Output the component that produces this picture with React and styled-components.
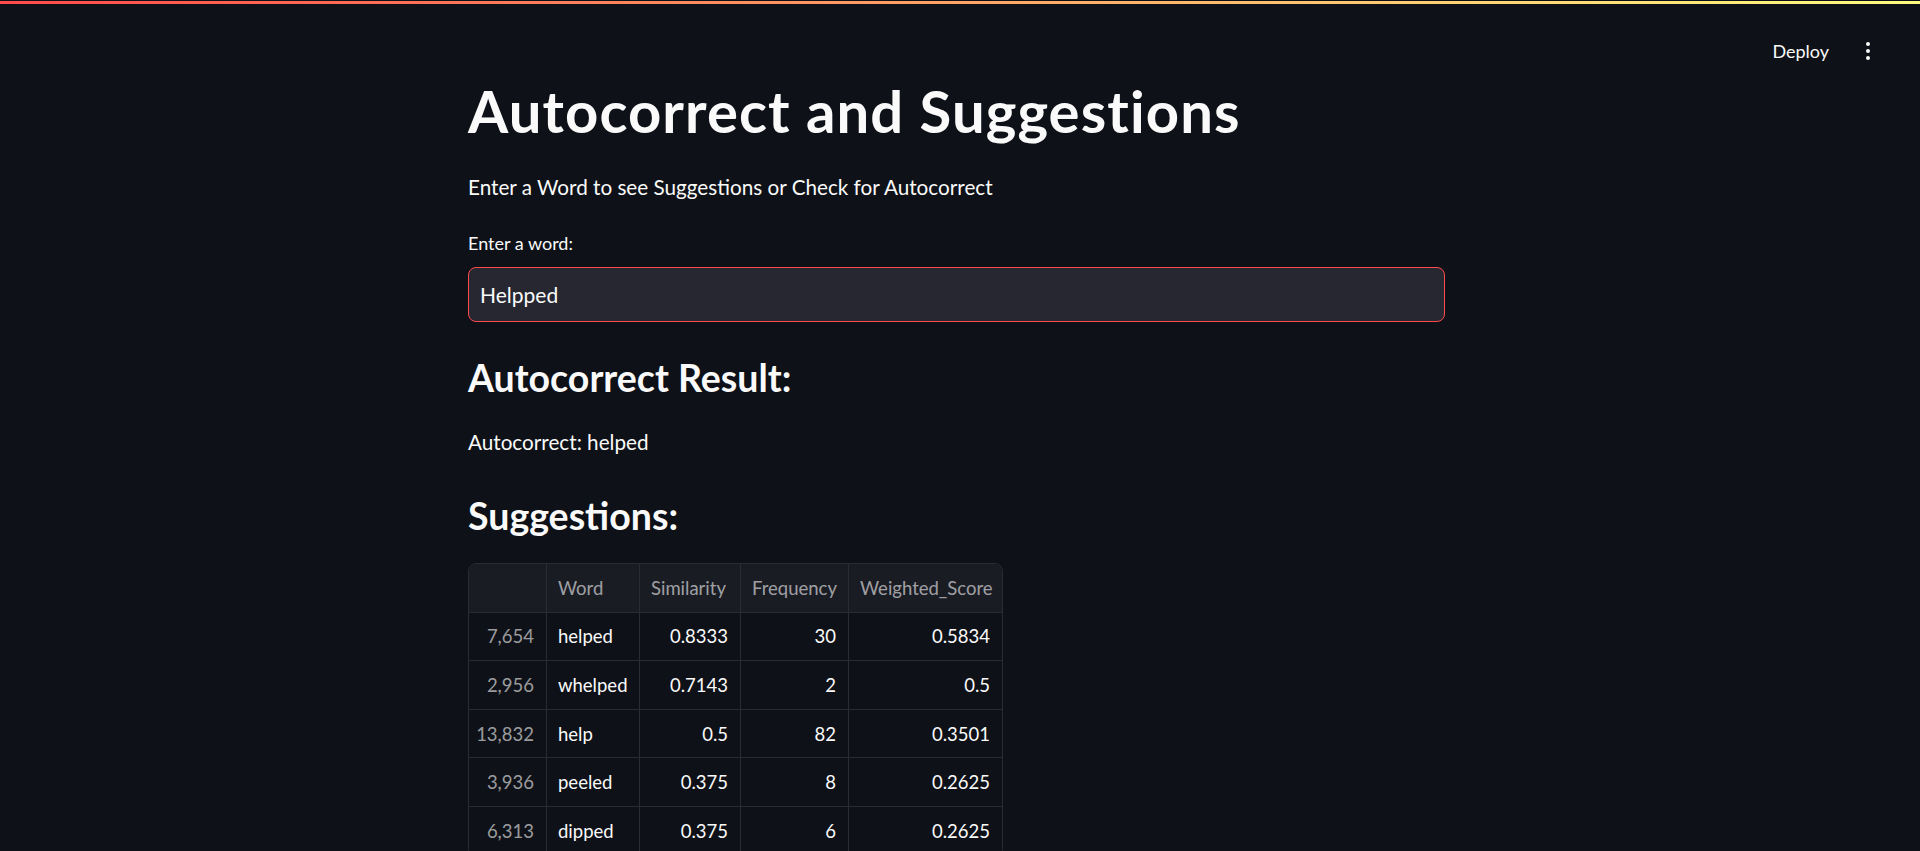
import React from "react";
import styled, { createGlobalStyle } from "styled-components";

const GlobalStyle = createGlobalStyle`
  html, body {
    margin: 0;
    padding: 0;
    background: #0e1117;
    color: #fafafa;
    font-family: "Source Sans Pro", Lato, "Noto Sans", sans-serif;
    overflow: hidden;
  }
  * { box-sizing: border-box; }
`;

const Page = styled.div`
  min-height: 851px;
  display: flex;
  flex-direction: column;
  background: #0e1117;
`;

const Decoration = styled.div`
  margin-top: 1px;
  height: 2.5px;
  background: linear-gradient(90deg, #ff4b4b, #fffd80);
`;

const Header = styled.header`
  height: 71.5px;
  padding: 24px 42px 0 0;
  display: flex;
  justify-content: flex-end;
  align-items: center;
  gap: 29px;
`;

const DeployButton = styled.button`
  background: transparent;
  border: none;
  padding: 0;
  color: #fafafa;
  font-family: inherit;
  font-size: 18px;
  line-height: 24px;
  cursor: pointer;
`;

const MenuButton = styled.button`
  width: 20px;
  height: 30px;
  background: transparent;
  border: none;
  padding: 0;
  display: flex;
  flex-direction: column;
  align-items: center;
  justify-content: center;
  gap: 3px;
`;

const Dot = styled.span`
  width: 4px;
  height: 4px;
  border-radius: 50%;
  background: #fafafa;
`;

const Main = styled.main`
  width: 977px;
  margin-left: calc(50% - 492px);
  display: flex;
  flex-direction: column;
`;

const Title = styled.h1`
  margin: 1px 0 0;
  font-size: 58px;
  line-height: 1.2;
  font-weight: 700;
  letter-spacing: 1.1px;
  color: #fafafa;
`;

const Paragraph = styled.p`
  margin: ${(p) => p.$top}px 0 0;
  font-size: 20.7px;
  line-height: 1.6;
  color: #fafafa;
`;

const Label = styled.label`
  margin-top: 27px;
  font-size: 18px;
  line-height: 1.4;
  color: #fafafa;
`;

const Input = styled.input`
  margin-top: 11px;
  height: 55px;
  width: 100%;
  border: 1px solid #ff4b4b;
  border-radius: 8px;
  background: #262730;
  color: #fafafa;
  font-family: inherit;
  font-size: 21px;
  line-height: 53px;
  padding: 0 11px;
  outline: none;
`;

const SubHeading = styled.h3`
  margin: ${(p) => p.$top}px 0 0;
  font-size: 37.5px;
  line-height: 1.2;
  font-weight: 700;
  color: #fafafa;
`;

const TableFrame = styled.div`
  margin-top: 25px;
  width: 535px;
  border: 1px solid #2a2c34;
  border-radius: 8px;
  overflow: hidden;
  display: grid;
  grid-template-columns: 78px 93px 101px 108px 153px;
`;

const Cell = styled.div`
  height: 48.6px;
  display: flex;
  align-items: center;
  justify-content: ${(p) => (p.$align === "right" ? "flex-end" : "flex-start")};
  padding: 0 12px 0 11px;
  border-right: ${(p) => (p.$last ? "none" : "1px solid #2a2c34")};
  border-bottom: 1px solid #2a2c34;
  font-size: 18.5px;
  white-space: nowrap;
  background: ${(p) => (p.$head ? "#1a1c24" : "#0e1117")};
  color: ${(p) => (p.$muted ? "rgba(250,250,250,0.6)" : "#fafafa")};
`;

const columns = ["", "Word", "Similarity", "Frequency", "Weighted_Score"];

const rows = [
  ["7,654", "helped", "0.8333", "30", "0.5834"],
  ["2,956", "whelped", "0.7143", "2", "0.5"],
  ["13,832", "help", "0.5", "82", "0.3501"],
  ["3,936", "peeled", "0.375", "8", "0.2625"],
  ["6,313", "dipped", "0.375", "6", "0.2625"],
];

export default function App() {
  return (
    <>
      <GlobalStyle />
      <Page>
        <Decoration />
        <Header>
          <DeployButton>Deploy</DeployButton>
          <MenuButton aria-label="menu">
            <Dot />
            <Dot />
            <Dot />
          </MenuButton>
        </Header>
        <Main>
          <Title>Autocorrect and Suggestions</Title>
          <Paragraph $top={25}>
            Enter a Word to see Suggestions or Check for Autocorrect
          </Paragraph>
          <Label>Enter a word:</Label>
          <Input defaultValue="Helpped" />
          <SubHeading $top={33}>Autocorrect Result:</SubHeading>
          <Paragraph $top={26}>Autocorrect: helped</Paragraph>
          <SubHeading $top={34}>Suggestions:</SubHeading>
          <TableFrame>
            {columns.map((c, i) => (
              <Cell key={"h" + i} $head $muted $last={i === columns.length - 1}>
                {c}
              </Cell>
            ))}
            {rows.map((r, ri) =>
              r.map((v, ci) => (
                <Cell
                  key={ri + "-" + ci}
                  $align={ci === 1 ? "left" : "right"}
                  $muted={ci === 0}
                  $last={ci === r.length - 1}
                >
                  {v}
                </Cell>
              ))
            )}
          </TableFrame>
        </Main>
      </Page>
    </>
  );
}
